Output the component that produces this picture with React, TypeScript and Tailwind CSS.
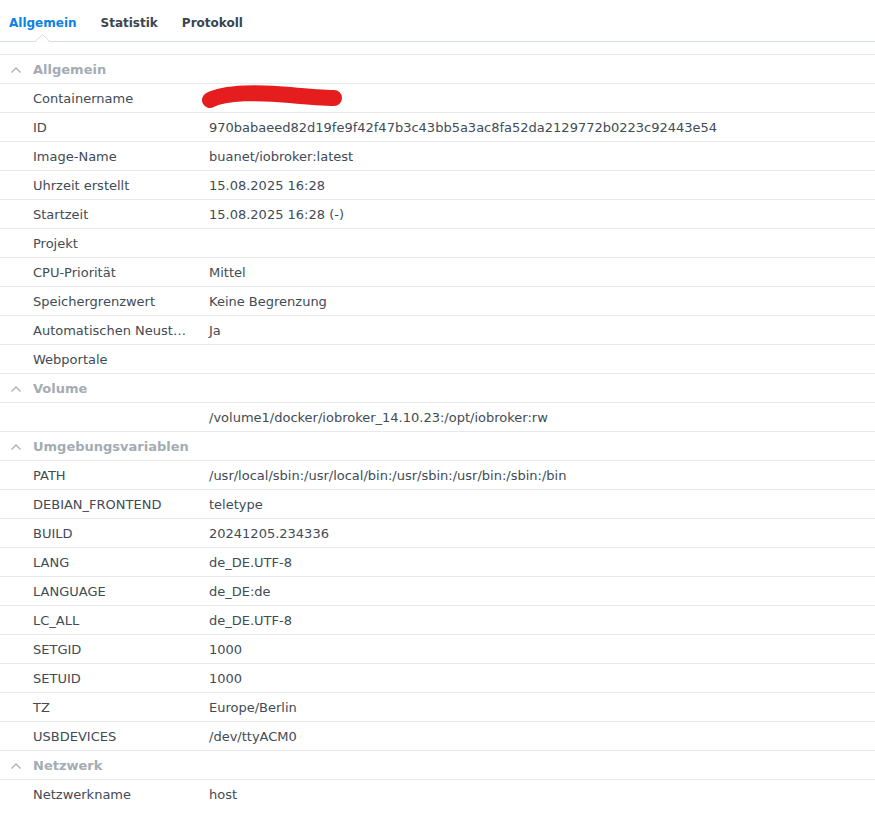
import React from 'react';

type Row = { label: string; value?: React.ReactNode };
type Section = { title: string; rows: Row[] };

const Redacted = () => (
  <svg width="150" height="28" viewBox="0 0 150 28" className="block -ml-[9px]">
    <path
      d="M10 15 C 25 7, 60 7, 90 10 S 125 13, 134 13"
      fill="none"
      stroke="#e51d1f"
      strokeWidth="16"
      strokeLinecap="round"
    />
  </svg>
);

const sections: Section[] = [
  {
    title: 'Allgemein',
    rows: [
      { label: 'Containername', value: <Redacted /> },
      { label: 'ID', value: '970babaeed82d19fe9f42f47b3c43bb5a3ac8fa52da2129772b0223c92443e54' },
      { label: 'Image-Name', value: 'buanet/iobroker:latest' },
      { label: 'Uhrzeit erstellt', value: '15.08.2025 16:28' },
      { label: 'Startzeit', value: '15.08.2025 16:28 (-)' },
      { label: 'Projekt', value: '' },
      { label: 'CPU-Priorität', value: 'Mittel' },
      { label: 'Speichergrenzwert', value: 'Keine Begrenzung' },
      { label: 'Automatischen Neustart', value: 'Ja' },
      { label: 'Webportale', value: '' },
    ],
  },
  {
    title: 'Volume',
    rows: [{ label: '', value: '/volume1/docker/iobroker_14.10.23:/opt/iobroker:rw' }],
  },
  {
    title: 'Umgebungsvariablen',
    rows: [
      { label: 'PATH', value: '/usr/local/sbin:/usr/local/bin:/usr/sbin:/usr/bin:/sbin:/bin' },
      { label: 'DEBIAN_FRONTEND', value: 'teletype' },
      { label: 'BUILD', value: '20241205.234336' },
      { label: 'LANG', value: 'de_DE.UTF-8' },
      { label: 'LANGUAGE', value: 'de_DE:de' },
      { label: 'LC_ALL', value: 'de_DE.UTF-8' },
      { label: 'SETGID', value: '1000' },
      { label: 'SETUID', value: '1000' },
      { label: 'TZ', value: 'Europe/Berlin' },
      { label: 'USBDEVICES', value: '/dev/ttyACM0' },
    ],
  },
  {
    title: 'Netzwerk',
    rows: [{ label: 'Netzwerkname', value: 'host' }],
  },
];

const Chevron = () => (
  <svg width="12" height="8" viewBox="0 0 12 8" className="ml-[10px] mr-[11px]">
    <polyline points="1.5,6.5 6,2 10.5,6.5" fill="none" stroke="#a9b1b9" strokeWidth="1.4" />
  </svg>
);

export default function App() {
  return (
    <div
      className="w-[875px] h-[816px] bg-white text-[13px] text-[#414b55] overflow-hidden"
      style={{ fontFamily: '"DejaVu Sans", Verdana, sans-serif' }}
    >
      {/* tabs */}
      <div className="relative h-[42px] border-b border-[#d6dde3] flex items-center pt-[4px] pl-[9px] gap-[24px] font-bold text-[12px]">
        <span className="text-[#0a82e6]">Allgemein</span>
        <span className="text-[#3b4550]">Statistik</span>
        <span className="text-[#3b4550]">Protokoll</span>
        <svg
          width="16"
          height="8"
          viewBox="0 0 16 8"
          className="absolute left-[35px] bottom-[-1px]"
        >
          <polyline points="0,7.5 7.5,0.8 15,7.5" fill="#fff" stroke="#d6dde3" strokeWidth="1" />
          <rect x="1" y="7.2" width="13" height="1" fill="#fff" />
        </svg>
      </div>

      <div className="mt-[12px] border-t border-[#e6eaee] [&>div:last-child>div:last-child]:border-b-0">
        {sections.map((s) => (
          <div key={s.title}>
            <div className="h-[29px] border-b border-[#e6eaee] flex items-center pt-[1px] font-bold text-[#a4acb3]">
              <Chevron />
              <span>{s.title}</span>
            </div>
            {s.rows.map((r, i) => (
              <div key={i} className="h-[29px] border-b border-[#e6eaee] flex items-center pt-[1px]">
                <div className="w-[192px] shrink-0 pl-[33px] pr-[2px] truncate">{r.label}</div>
                <div className="pl-[17px] whitespace-nowrap">{r.value}</div>
              </div>
            ))}
          </div>
        ))}
      </div>
    </div>
  );
}
